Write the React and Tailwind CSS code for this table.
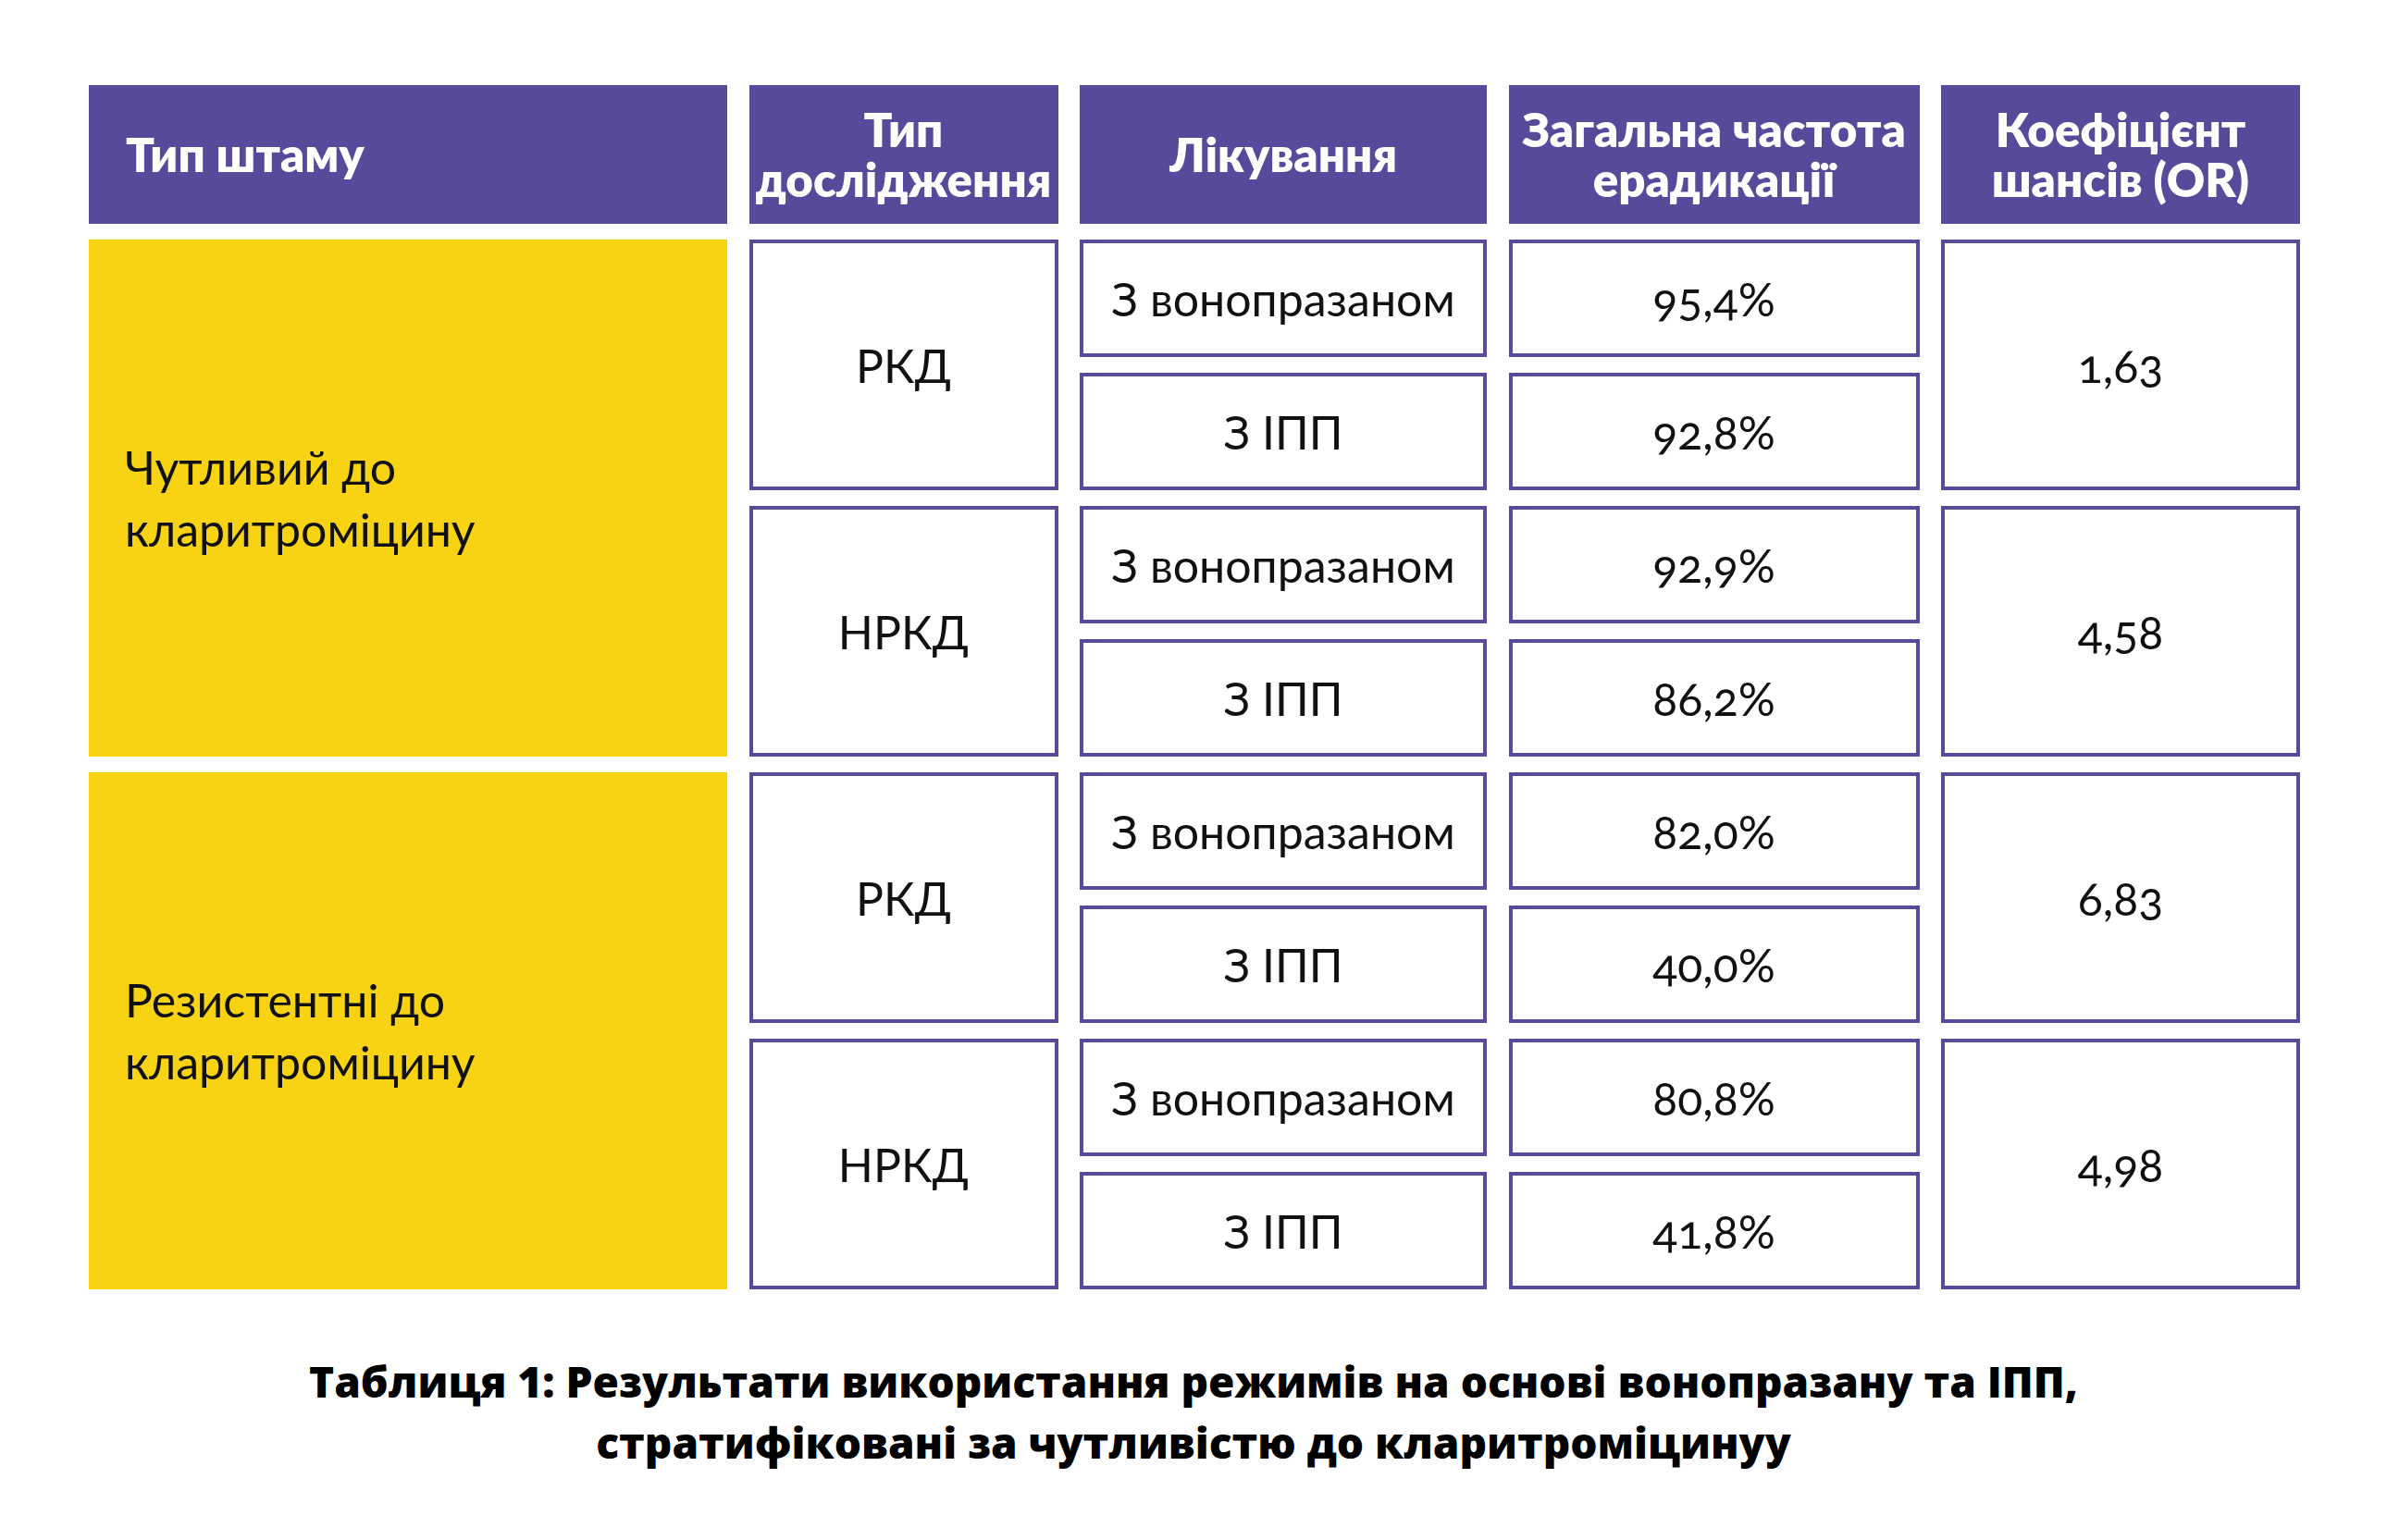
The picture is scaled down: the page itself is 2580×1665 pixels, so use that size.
import React from 'react';

const GROUPS = [
  {
    strain: ['Чутливий до', 'кларитроміцину'],
    studies: [
      { type: 'РКД', or: '1,63', rows: [['З вонопразаном', '95,4%'], ['З ІПП', '92,8%']] },
      { type: 'НРКД', or: '4,58', rows: [['З вонопразаном', '92,9%'], ['З ІПП', '86,2%']] }
    ]
  },
  {
    strain: ['Резистентні до', 'кларитроміцину'],
    studies: [
      { type: 'РКД', or: '6,83', rows: [['З вонопразаном', '82,0%'], ['З ІПП', '40,0%']] },
      { type: 'НРКД', or: '4,98', rows: [['З вонопразаном', '80,8%'], ['З ІПП', '41,8%']] }
    ]
  }
];

// grid rows: 1 = header, then 8 body rows
const ROW_START = ['row-start-2', 'row-start-3', 'row-start-4', 'row-start-5', 'row-start-6', 'row-start-7', 'row-start-8', 'row-start-9'];

function HeadCell({ children, left }) {
  return (
    <div
      className={`row-start-1 bg-[#564a9a] text-white font-extrabold text-[51px] leading-[54px] flex items-center whitespace-nowrap ${left ? 'justify-start pl-[40px]' : 'justify-center text-center'}`}
    >
      {children}
    </div>
  );
}

function BoxCell({ className, children }) {
  return (
    <div className={`border-[4px] border-[#564a9a] bg-white flex items-center justify-center text-[50px] leading-none font-normal text-[#111] oldstyle-nums ${className}`}>
      {children}
    </div>
  );
}

export default function App() {
  return (
    <div className="w-[2580px] h-[1665px] bg-white" style={{ fontFamily: 'Lato, "Open Sans", sans-serif' }}>
      <div className="pt-[92px] pl-[96px]">
        <div className="grid grid-cols-[690px_334px_440px_444px_388px] grid-rows-[150px_repeat(8,127px)] gap-x-[23.5px] gap-y-[17px] w-[2390px]">
          <HeadCell left>Тип штаму</HeadCell>
          <HeadCell>Тип<br />дослідження</HeadCell>
          <HeadCell>Лікування</HeadCell>
          <HeadCell>Загальна частота<br />ерадикації</HeadCell>
          <HeadCell>Коефіцієнт<br />шансів (OR)</HeadCell>

          {GROUPS.map((g, gi) => (
            <React.Fragment key={gi}>
              <div className={`col-start-1 row-span-4 ${ROW_START[gi * 4]} bg-[#f8d313] flex items-center pl-[39px] text-[50px] leading-[67px] font-normal text-[#111]`}>
                <div>{g.strain[0]}<br />{g.strain[1]}</div>
              </div>
              {g.studies.map((s, si) => {
                const r = gi * 4 + si * 2;
                return (
                  <React.Fragment key={si}>
                    <BoxCell className={`col-start-2 row-span-2 ${ROW_START[r]}`}>{s.type}</BoxCell>
                    {s.rows.map(([treat, rate], ri) => (
                      <React.Fragment key={ri}>
                        <BoxCell className={`col-start-3 ${ROW_START[r + ri]}`}>{treat}</BoxCell>
                        <BoxCell className={`col-start-4 ${ROW_START[r + ri]}`}>{rate}</BoxCell>
                      </React.Fragment>
                    ))}
                    <BoxCell className={`col-start-5 row-span-2 ${ROW_START[r]}`}>{s.or}</BoxCell>
                  </React.Fragment>
                );
              })}
            </React.Fragment>
          ))}
        </div>
      </div>

      <p
        className="mt-[66px] text-center font-extrabold text-[46px] leading-[66px] text-black"
        style={{ fontFamily: '"Open Sans", sans-serif' }}
      >
        Таблиця 1: Результати використання режимів на основі вонопразану та ІПП,
        <br />
        стратифіковані за чутливістю до кларитроміцинуу
      </p>
    </div>
  );
}
